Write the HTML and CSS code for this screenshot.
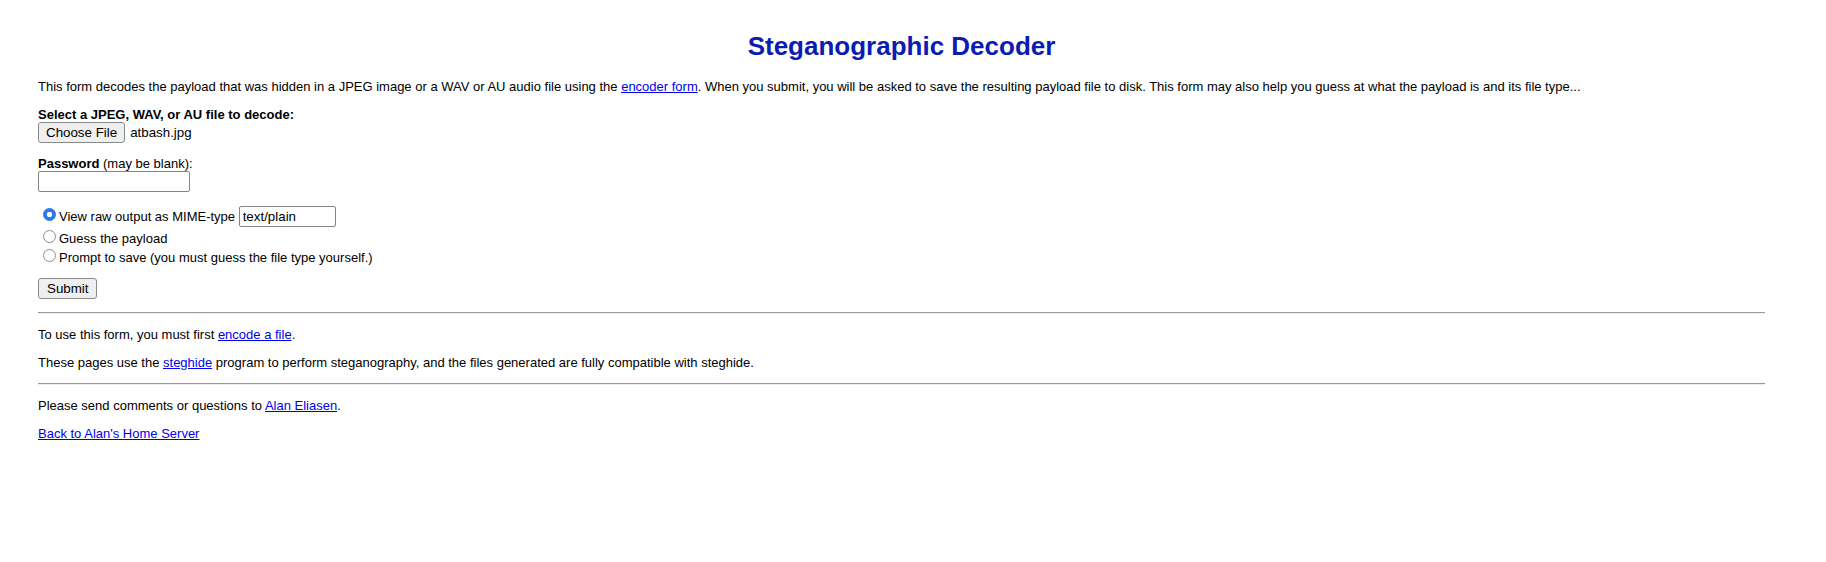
FILE: index.html
```html
<!DOCTYPE html>
<html>
<head>
<meta charset="utf-8">
<title>Steganographic Decoder</title>
<link rel="stylesheet" href="styles.css">
</head>
<body>
<div class="page">
  <h1 class="title">Steganographic Decoder</h1>
  <p>This form decodes the payload that was hidden in a JPEG image or a WAV or AU audio file using the <a href="#">encoder form</a>. When you submit, you will be asked to save the resulting payload file to disk. This form may also help you guess at what the payload is and its file type...</p>
  <form class="decoder">
    <p><b>Select a JPEG, WAV, or AU file to decode:</b><br><button type="button" class="btn file-btn">Choose File</button><span class="file-name">atbash.jpg</span></p>
    <p><b>Password</b> (may be blank):<br><input type="password" class="field field-pass"></p>
    <p class="choices"><input type="radio" name="mode" class="radio" checked>View raw output as MIME-type <input type="text" class="field field-mime" value="text/plain"><br><input type="radio" name="mode" class="radio">Guess the payload<br><input type="radio" name="mode" class="radio">Prompt to save (you must guess the file type yourself.)</p>
    <p><button type="button" class="btn submit-btn">Submit</button></p>
  </form>
  <hr class="rule">
  <p>To use this form, you must first <a href="#">encode a file</a>.</p>
  <p>These pages use the <a href="#">steghide</a> program to perform steganography, and the files generated are fully compatible with steghide.</p>
  <hr class="rule">
  <p>Please send comments or questions to <a href="#">Alan Eliasen</a>.</p>
  <p><a href="#">Back to Alan's Home Server</a></p>
</div>
</body>
</html>
```
FILE: styles.css
```css
html, body {
  margin: 0;
  background: #fff;
}
body {
  font-family: "Liberation Sans", Arial, Helvetica, sans-serif;
  font-size: 13px;
  color: #000;
}
.page {
  padding: 14px 61px 20px 38px;
}
.title {
  font-size: 26px;
  font-weight: bold;
  text-align: center;
  color: #0a1cb2;
  margin: 17px 0;
}
p {
  margin: 13px 0;
}
a {
  color: #0000ee;
  text-decoration: underline;
}
.decoder {
  margin: 0;
}
.btn {
  font: 13.333px "Liberation Sans", Arial, sans-serif;
  line-height: 15px;
  color: #000;
  background: #efefef;
  border: 1px solid #8a8a8a;
  border-radius: 3px;
  padding: 2px 7px;
  margin: 0;
  box-sizing: border-box;
  height: 21px;
}
.file-btn {
  margin-right: 5px;
}
.submit-btn {
  padding: 2px 8px;
}
.file-name {
  font-size: 13.333px;
}
.field {
  font: 13.333px "Liberation Sans", Arial, sans-serif;
  color: #000;
  background: #fff;
  border: 1px solid #858585;
  border-radius: 2px;
  padding: 1px 3px;
  margin: 0;
  box-sizing: border-box;
  height: 21px;
}
.field-pass {
  width: 152px;
}
.field-mime {
  width: 97px;
}
.radio {
  appearance: none;
  -webkit-appearance: none;
  width: 13px;
  height: 13px;
  margin: 3px 3px 0 5px;
  border: 1px solid #8e8e8e;
  border-radius: 50%;
  background: #fff;
  box-sizing: border-box;
  vertical-align: baseline;
}
.radio:checked {
  border-color: #1f6fe5;
  background: radial-gradient(circle, #fff 0 2.4px, #2b7bf4 3px);
}
.rule {
  margin: 6.5px 0;
  border: 0;
  border-top: 1px solid #9a9a9a;
  border-bottom: 1px solid #eeeeee;
  height: 0;
}
```
